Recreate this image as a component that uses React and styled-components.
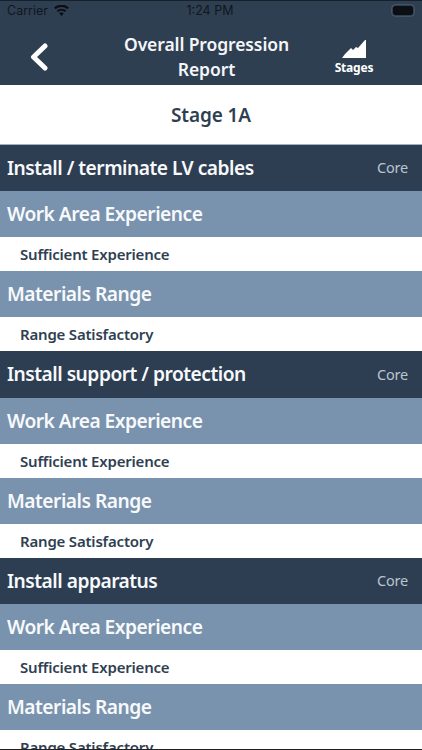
import React from "react";
import styled, { createGlobalStyle } from "styled-components";

const Global = createGlobalStyle`
  html, body { margin: 0; padding: 0; background: #fff; }
  body { width: 422px; height: 750px; overflow: hidden; font-family: "Noto Sans", sans-serif; }
`;
const Page = styled.div`
  width: 422px; height: 750px; overflow: hidden; display: flex; flex-direction: column;
  position: relative; background: #fff;
  &::after { content: ""; position: absolute; left: 0; right: 0; bottom: 0; height: 1px; background: #222; }
`;
const Top = styled.header`
  flex: none; height: 85px; background: #2f3f52; border-top: 1px solid #15202b; box-sizing: border-box;
  display: flex; flex-direction: column; color: #fff;
`;
const Status = styled.div`
  height: 19px; padding: 0 9px 0 7px; display: grid; grid-template-columns: 1fr auto 1fr; align-items: center;
  font: 400 12.5px "Inter", sans-serif; color: #10161d;
`;
const Carrier = styled.div` display: flex; align-items: center; gap: 6px; `;
const Battery = styled.div`
  justify-self: end; width: 20px; height: 9px; background: #0b0f14; border-radius: 2.5px;
  box-shadow: 0 0 0 1px #2f3f52, 0 0 0 1.5px #5b6672;
`;
const Nav = styled.div`
  flex: 1; display: grid; grid-template-columns: 78px 1fr 87px; align-items: center; padding: 9px 0 0;
`;
const Back = styled.div` display: flex; padding-left: 29px; `;
const Title = styled.h1`
  margin: 0; font: 600 17.5px/25px "Noto Sans", sans-serif; text-align: center; color: #f4f6f8; letter-spacing: -.1px;
`;
const Stages = styled.div`
  display: flex; flex-direction: column; align-items: center; gap: 3px; font: 700 12px/14px "Noto Sans", sans-serif; padding-right: 49px; letter-spacing: -.2px;
`;
const StageHead = styled.div`
  flex: none; height: 59.5px; display: flex; align-items: center; justify-content: center; padding-top: 1px;
  font: 600 19px "Noto Sans", sans-serif; color: #2f3f52; border-bottom: 1px solid #9fb0c2; box-sizing: border-box; letter-spacing: -.1px;
`;
const Band = styled.div`
  flex: none; height: ${p => p.$h}px; display: flex; align-items: center; justify-content: space-between;
  padding: 0 14px 1px 7px; background: ${p => p.$bg}; color: #f7f9fb;
  font: 600 19.2px "Noto Sans", sans-serif; letter-spacing: -.5px; box-sizing: border-box;
`;
const Tag = styled.span` font: 400 14.5px "Noto Sans", sans-serif; letter-spacing: -.2px; color: #b9c4cf; `;
const Item = styled.div`
  flex: none; height: 34px; display: flex; align-items: center; padding: 0 0 0 20px;
  font: 600 15px "Noto Sans", sans-serif; color: #2f3f52; background: #fff; box-sizing: border-box; letter-spacing: -.2px;
`;

const Group = ({ title }) => (
  <>
    <Band $h={46.5} $bg="#2e3e52">{title}<Tag>Core</Tag></Band>
    <Band $h={46} $bg="#7993ae">Work Area Experience</Band>
    <Item>Sufficient Experience</Item>
    <Band $h={46} $bg="#7993ae">Materials Range</Band>
    <Item>Range Satisfactory</Item>
  </>
);

export default function App() {
  return (
    <Page>
      <Global />
      <Top>
        <Status>
          <Carrier>Carrier
            <svg width="15" height="11" viewBox="0 0 15 11" fill="#0b0f14"><path d="M7.5 11 5.2 8.3a3.4 3.4 0 0 1 4.6 0zM4.1 7.1 2.7 5.5a7.2 7.2 0 0 1 9.6 0l-1.4 1.6a5 5 0 0 0-6.8 0zM1.6 4.2 0 2.6a11 11 0 0 1 15 0l-1.6 1.6a8.8 8.8 0 0 0-11.8 0z"/></svg>
          </Carrier>
          <span>1:24 PM</span>
          <Battery />
        </Status>
        <Nav>
          <Back>
            <svg width="20" height="28" viewBox="0 0 20 28" fill="none" stroke="#fff" strokeWidth="5" strokeLinecap="round" strokeLinejoin="round"><path d="M16 3 4.5 14 16 25"/></svg>
          </Back>
          <Title>Overall Progression<br />Report</Title>
          <Stages>
            <svg width="24" height="18" viewBox="0 0 24 18" fill="#fff"><path d="M0 18 3 14 6 11 9 8 11 10 14 7 16 8 23 0 24 0V18Z"/></svg>
            Stages
          </Stages>
        </Nav>
      </Top>
      <StageHead>Stage 1A</StageHead>
      <Group title="Install / terminate LV cables" />
      <Group title="Install support / protection" />
      <Group title="Install apparatus" />
    </Page>
  );
}
